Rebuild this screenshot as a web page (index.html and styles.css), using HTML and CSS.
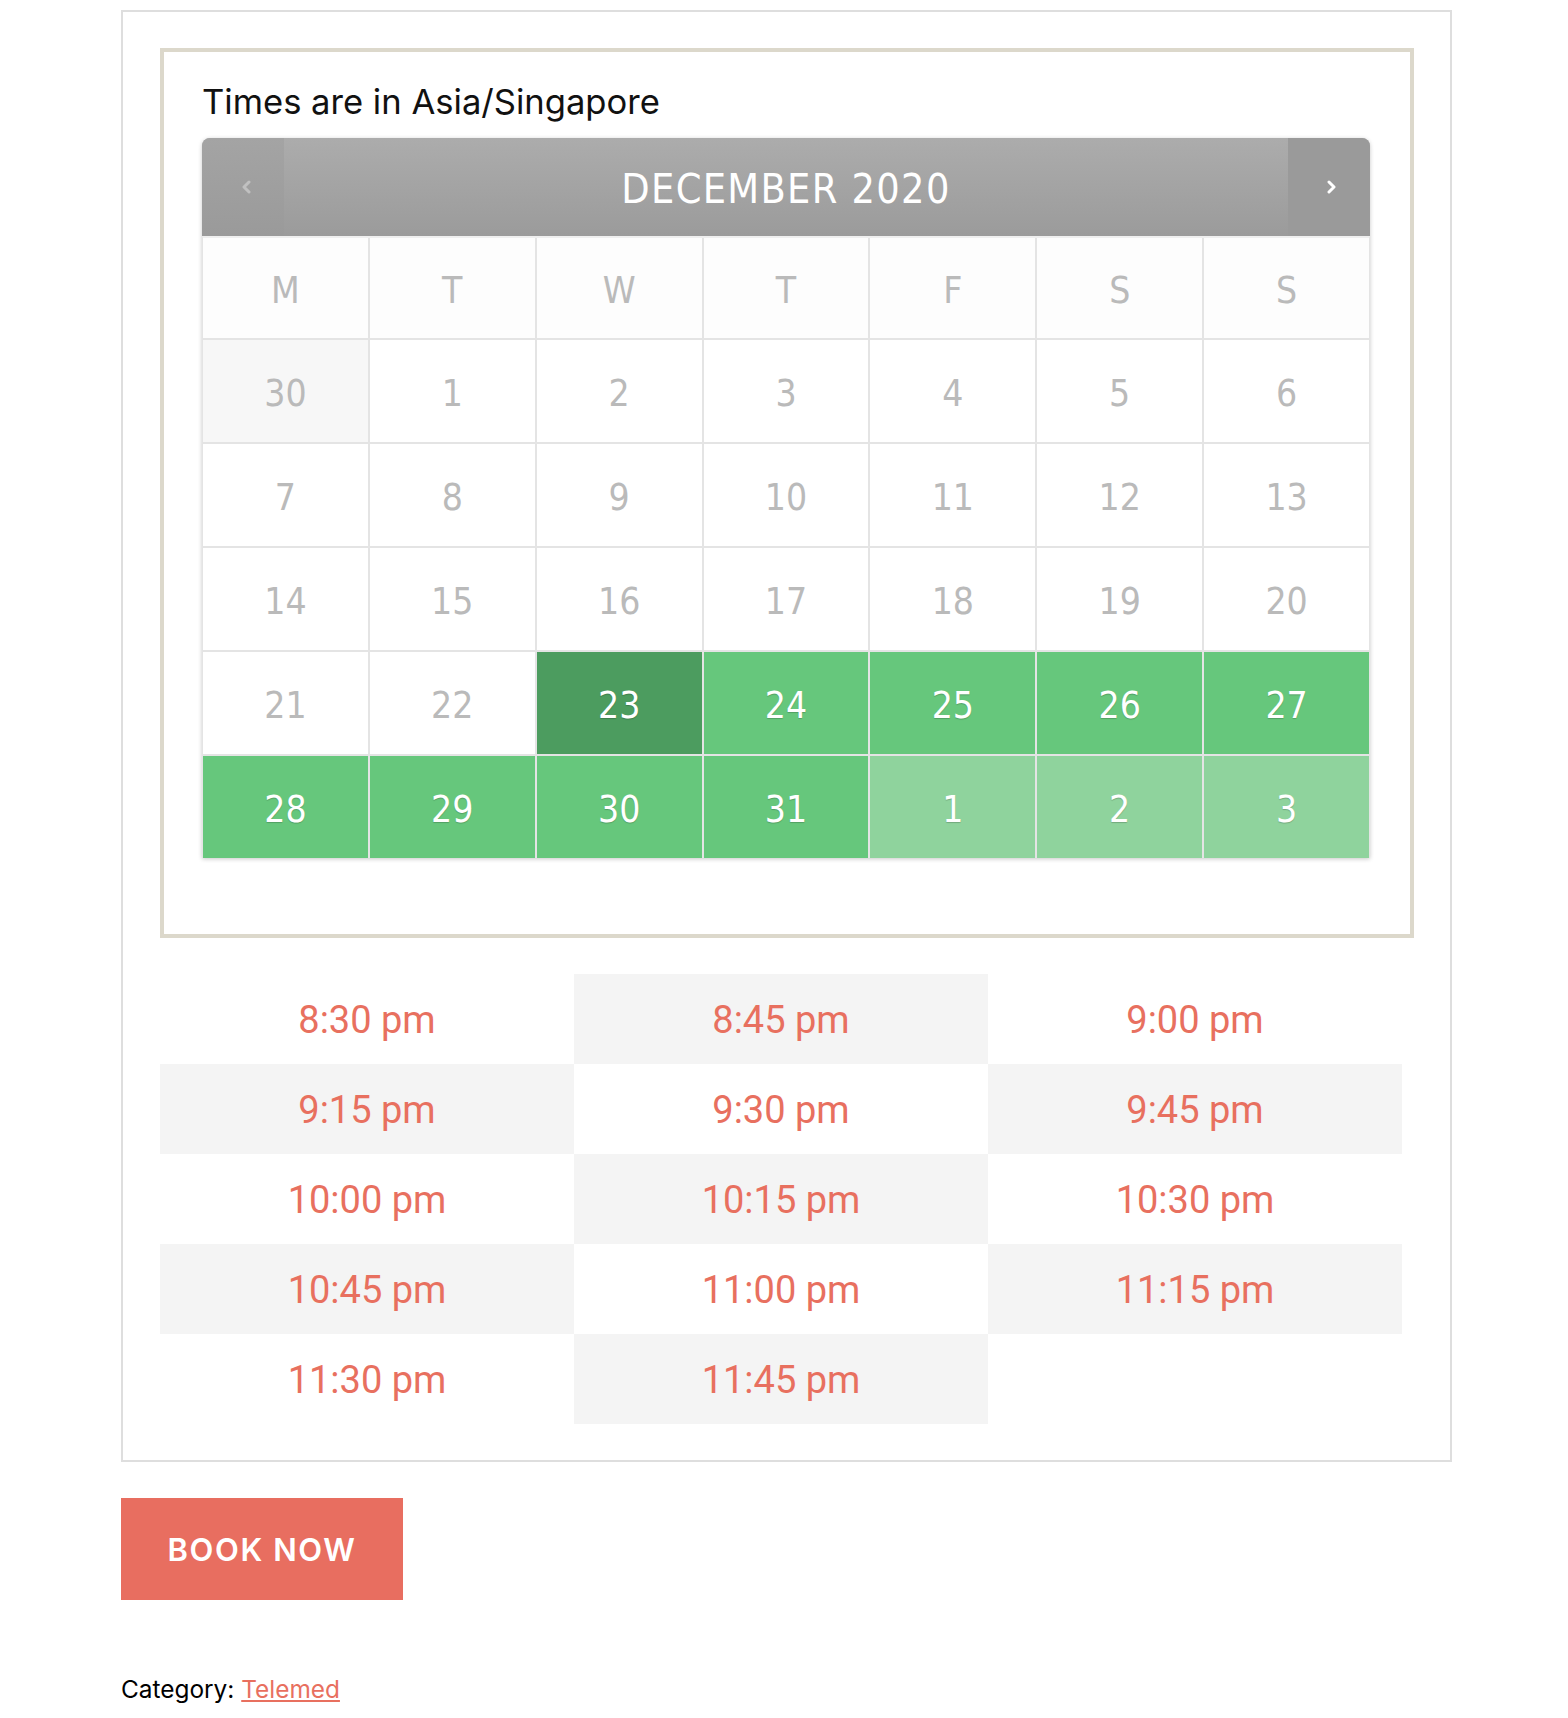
FILE: index.html
```html
<!DOCTYPE html>
<html lang="en">
<head>
<meta charset="utf-8">
<title>Booking</title>
<link rel="stylesheet" href="styles.css">
</head>
<body>
<div class="page">
  <div class="booking">
    <div class="picker">
      <div class="tz">Times are in Asia/Singapore</div>
      <div class="calendar">
        <div class="cal-head">
          <div class="nav prev"><svg width="10" height="14" viewBox="0 0 10 14"><polyline points="8,2 3,7 8,12" fill="none" stroke="#ffffff" stroke-width="3" stroke-linecap="round" stroke-linejoin="round"/></svg></div>
          <div class="month">DECEMBER 2020</div>
          <div class="nav next"><svg width="10" height="14" viewBox="0 0 10 14"><polyline points="2,2 7,7 2,12" fill="none" stroke="#ffffff" stroke-width="3" stroke-linecap="round" stroke-linejoin="round"/></svg></div>
        </div>
        <div class="cal-grid">
          <div class="wd">M</div><div class="wd">T</div><div class="wd">W</div><div class="wd">T</div><div class="wd">F</div><div class="wd">S</div><div class="wd">S</div>
          <div class="day other">30</div><div class="day">1</div><div class="day">2</div><div class="day">3</div><div class="day">4</div><div class="day">5</div><div class="day">6</div>
          <div class="day">7</div><div class="day">8</div><div class="day">9</div><div class="day">10</div><div class="day">11</div><div class="day">12</div><div class="day">13</div>
          <div class="day">14</div><div class="day">15</div><div class="day">16</div><div class="day">17</div><div class="day">18</div><div class="day">19</div><div class="day">20</div>
          <div class="day">21</div><div class="day">22</div><div class="day selected">23</div><div class="day avail">24</div><div class="day avail">25</div><div class="day avail">26</div><div class="day avail">27</div>
          <div class="day avail">28</div><div class="day avail">29</div><div class="day avail">30</div><div class="day avail">31</div><div class="day next-avail">1</div><div class="day next-avail">2</div><div class="day next-avail">3</div>
        </div>
      </div>
    </div>
    <div class="times">
      <div class="slot">8:30 pm</div>
      <div class="slot">8:45 pm</div>
      <div class="slot">9:00 pm</div>
      <div class="slot">9:15 pm</div>
      <div class="slot">9:30 pm</div>
      <div class="slot">9:45 pm</div>
      <div class="slot">10:00 pm</div>
      <div class="slot">10:15 pm</div>
      <div class="slot">10:30 pm</div>
      <div class="slot">10:45 pm</div>
      <div class="slot">11:00 pm</div>
      <div class="slot">11:15 pm</div>
      <div class="slot">11:30 pm</div>
      <div class="slot">11:45 pm</div>
    </div>
  </div>
  <button class="book">BOOK NOW</button>
  <div class="category">Category: <a href="#">Telemed</a></div>
</div>
</body>
</html>
```

FILE: styles.css
```css
html, body {
  margin: 0;
  padding: 0;
  background: #ffffff;
}

.page {
  padding: 10px 0 0 121px;
  font-family: Inter, "Noto Sans", sans-serif;
  color: #000;
}

.booking {
  width: 1331px;
  box-sizing: border-box;
  border: 2px solid #dedede;
  padding: 36px 36px 36px 37px;
}

.picker {
  border: 4px solid #dcd8cb;
  padding: 29px 39px 76px 38px;
}

.tz {
  font-family: Inter, sans-serif;
  font-size: 34.6px;
  line-height: 40px;
  color: #111;
  margin-bottom: 17px;
}

.calendar {
  width: 1168px;
  box-shadow: 0 1px 4px rgba(0, 0, 0, 0.22);
  border-radius: 8px 8px 0 0;
  font-family: "DejaVu Sans Condensed", "DejaVu Sans", sans-serif;
}

.cal-head {
  display: flex;
  height: 98px;
  border-radius: 8px 8px 0 0;
  overflow: hidden;
  background: linear-gradient(#acacac, #9b9b9b);
}

.nav {
  width: 82px;
  display: flex;
  align-items: center;
  justify-content: center;
}

.prev {
  background: linear-gradient(#a4a4a4, #9a9a9a);
}

.prev svg {
  opacity: 0.35;
  margin-left: 5px;
}

.next svg {
  margin-left: 6px;
}

.next {
  background: #9a9a9a;
}

.month {
  flex: 1;
  display: flex;
  align-items: center;
  justify-content: center;
  padding-top: 3px;
  color: #ffffff;
  font-size: 41px;
  letter-spacing: 1.3px;
}

.cal-grid {
  display: grid;
  grid-template-columns: repeat(7, 1fr);
  grid-template-rows: 100px repeat(5, 102px);
  gap: 2px;
  background: #e4e4e4;
  border-top: 2px solid #efefef;
  border-left: 1px solid #e4e4e4;
  border-right: 1px solid #e4e4e4;
}

.wd,
.day {
  display: flex;
  align-items: center;
  justify-content: center;
  padding-top: 4px;
  box-sizing: border-box;
  font-size: 37px;
  color: #bababa;
  background: #ffffff;
}

.wd {
  background: #fdfdfd;
}

.day.other {
  background: #f7f7f7;
}

.day.avail,
.day.selected,
.day.next-avail {
  color: #ffffff;
  text-shadow: 0 1px 1px rgba(0, 0, 0, 0.2);
}

.day.avail {
  background: #66c77c;
}

.day.selected {
  background: #4c9c5f;
}

.day.next-avail {
  background: #8fd39d;
}

.times {
  margin-top: 36px;
  width: 1242px;
  display: grid;
  grid-template-columns: repeat(3, 1fr);
  grid-auto-rows: 90px;
}

.slot {
  display: flex;
  align-items: center;
  justify-content: center;
  padding-top: 2px;
  box-sizing: border-box;
  font-family: Roboto, sans-serif;
  font-size: 38px;
  color: #e8705f;
  background: #ffffff;
}

.slot:nth-child(even) {
  background: #f4f4f4;
}

.book {
  display: block;
  margin-top: 36px;
  width: 282px;
  height: 102px;
  border: 0;
  padding: 0;
  background: #e86e60;
  color: #ffffff;
  font-family: Inter, sans-serif;
  font-weight: 600;
  font-size: 31px;
  letter-spacing: 1.6px;
}

.category {
  margin-top: 71px;
  font-size: 24.4px;
  line-height: 37px;
  color: #000;
}

.category a {
  color: #e8705f;
  text-decoration: underline;
}
```
